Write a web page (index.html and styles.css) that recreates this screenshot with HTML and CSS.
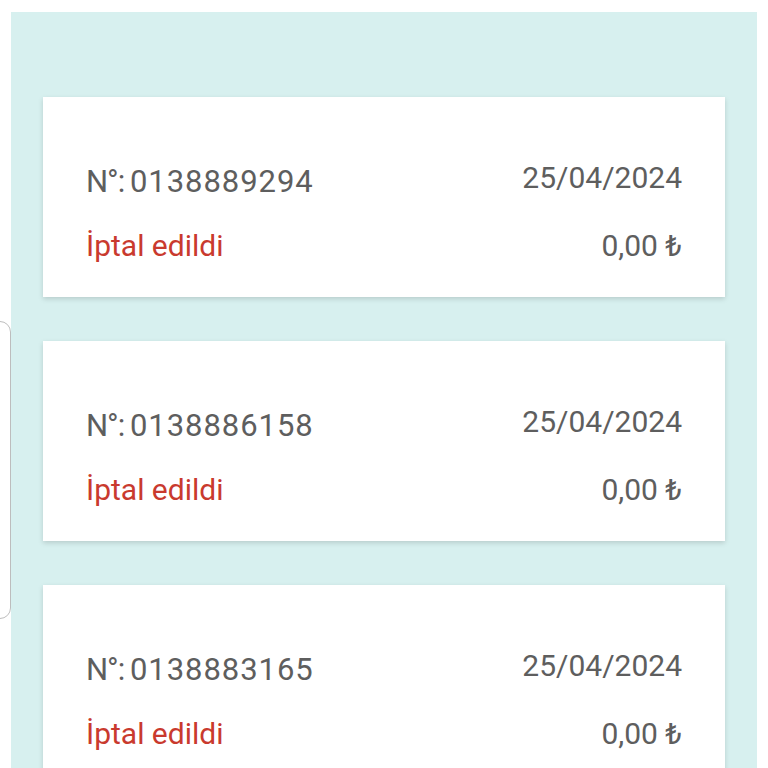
FILE: index.html
```html
<!DOCTYPE html>
<html lang="tr">
<head>
<meta charset="utf-8">
<link rel="stylesheet" href="styles.css">
</head>
<body>
<div class="panel">
  <div class="card">
    <div class="row">
      <span class="num"><span class="prefix">N°: </span>0138889294</span>
      <span class="date">25/04/2024</span>
    </div>
    <div class="row">
      <span class="status">İptal edildi</span>
      <span class="amount">0,00 ₺</span>
    </div>
  </div>
  <div class="card">
    <div class="row">
      <span class="num"><span class="prefix">N°: </span>0138886158</span>
      <span class="date">25/04/2024</span>
    </div>
    <div class="row">
      <span class="status">İptal edildi</span>
      <span class="amount">0,00 ₺</span>
    </div>
  </div>
  <div class="card">
    <div class="row">
      <span class="num"><span class="prefix">N°: </span>0138883165</span>
      <span class="date">25/04/2024</span>
    </div>
    <div class="row">
      <span class="status">İptal edildi</span>
      <span class="amount">0,00 ₺</span>
    </div>
  </div>
</div>
<div class="edge-tab"></div>
</body>
</html>
```

FILE: styles.css
```css
html, body {
  margin: 0;
  padding: 0;
  background: #ffffff;
  overflow: hidden;
}
body {
  font-family: Roboto, "Noto Sans", sans-serif;
  height: 768px;
}
.panel {
  margin: 12px 11px 0 11px;
  background: #d7f0ef;
  padding: 85px 32px 40px 32px;
  display: flex;
  flex-direction: column;
  gap: 44px;
}
.card {
  background: #ffffff;
  box-shadow: 0 2px 5px rgba(0, 0, 0, 0.15);
  padding: 67px 43px 33px 43px;
  display: flex;
  flex-direction: column;
  gap: 28px;
}
.row {
  display: flex;
  justify-content: space-between;
  align-items: flex-start;
  font-size: 30px;
  line-height: 36px;
  color: #5e5e5e;
}
.num {
  font-size: 31px;
  letter-spacing: 0.95px;
}
.prefix {
  letter-spacing: -1px;
  word-spacing: -1px;
}
.date {
  line-height: 28px;
}
.status {
  color: #c93a2e;
}
.edge-tab {
  position: fixed;
  left: -12px;
  top: 321px;
  width: 21px;
  height: 296px;
  background: #ffffff;
  border: 1px solid #bdbdbd;
  border-radius: 11px;
}
```
